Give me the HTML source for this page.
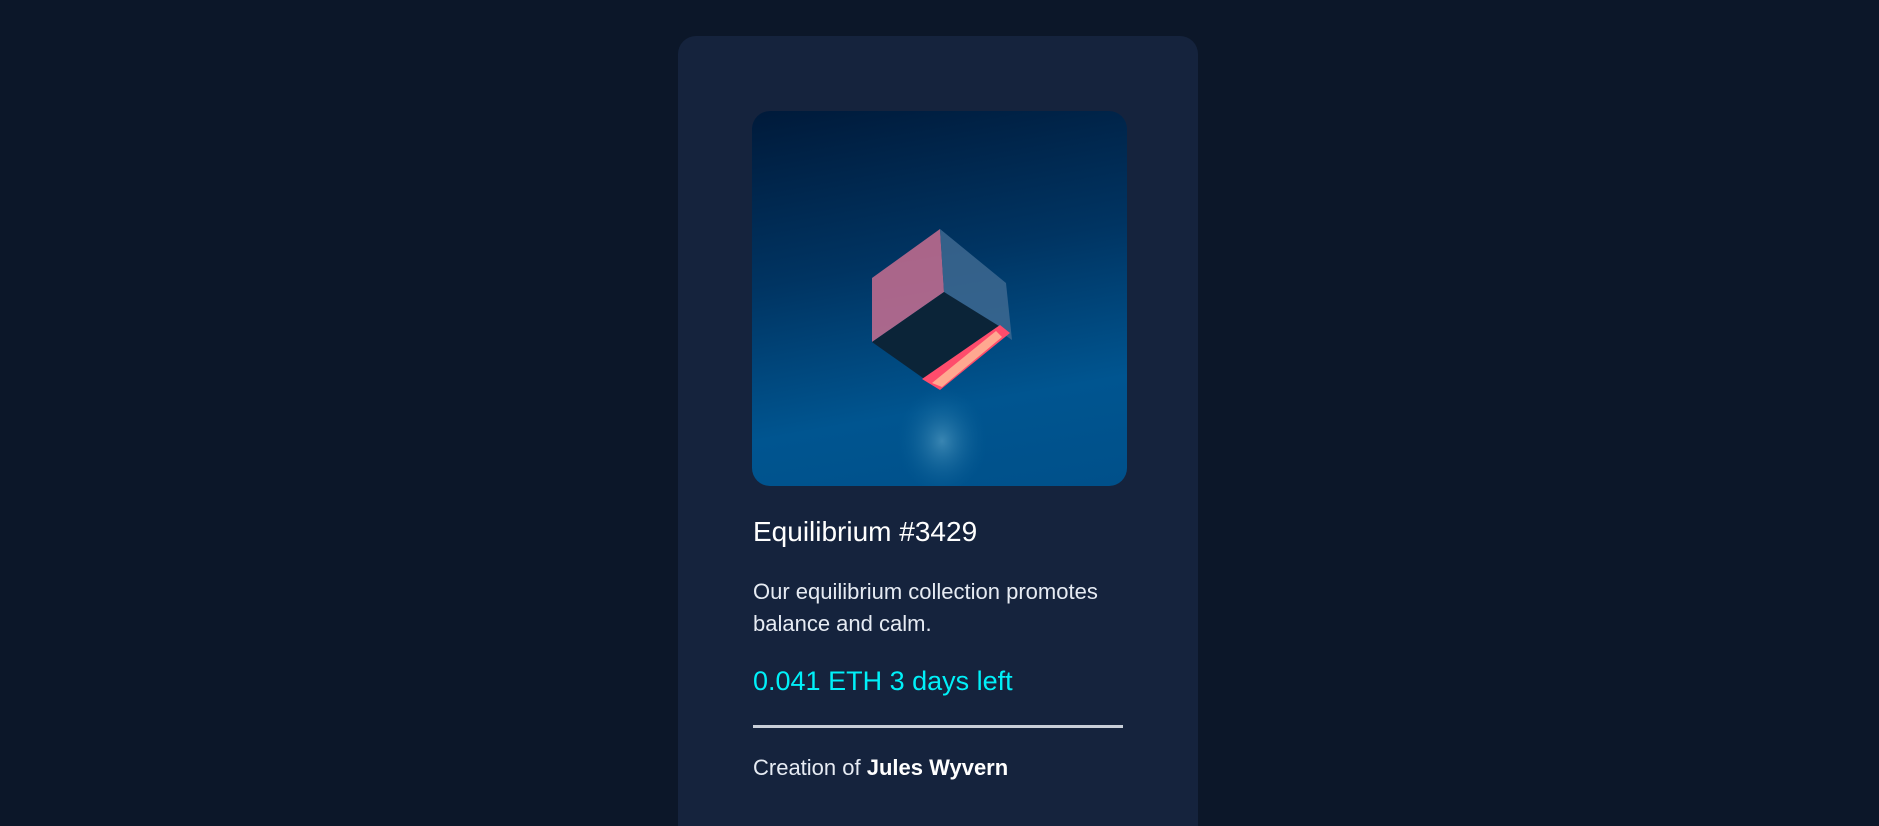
<!DOCTYPE html>
<html><head><meta charset="utf-8"><style>
*{margin:0;padding:0;box-sizing:border-box}
html,body{width:1879px;height:826px;overflow:hidden;background:#0c1729;font-family:"Liberation Sans",sans-serif}
.card{position:absolute;left:678px;top:36px;width:520px;height:790px;background:#15233d;border-radius:18px 18px 0 0}
.img{position:absolute;left:752px;top:111px;width:375px;height:375px;border-radius:18px;overflow:hidden;background:linear-gradient(170deg,#001a3a 0%,#003462 40%,#005590 75%,#00508a 100%)}
.t{position:absolute;left:753px;white-space:nowrap}
</style></head><body>
<div class="card"></div>
<div class="img">
<svg width="375" height="375" viewBox="0 0 375 375">
<defs>
<radialGradient id="g1" cx="0.5" cy="0.5" r="0.5"><stop offset="0" stop-color="#8fd0e8" stop-opacity=".8"/><stop offset="1" stop-color="#0a6aa0" stop-opacity="0"/></radialGradient>
</defs>
<ellipse cx="190" cy="330" rx="45" ry="55" fill="url(#g1)" opacity=".5"/>
<polygon points="188,118 120,167 120,231 192,181" fill="#c86f90" opacity=".85"/>
<polygon points="188,118 254,172 260,229 192,181" fill="#3d6890" opacity=".85"/>
<polygon points="120,231 192,181 255,220 188,279" fill="#0b2438"/>
<polygon points="170,268 188,279 258,222 248,214" fill="#ff4c6c"/>
<polygon points="180,272 190,276 250,226 244,220" fill="#ffa890"/>
</svg>
</div>
<div class="t" style="top:516px;font-size:28px;color:#fff">Equilibrium #3429</div>
<div class="t" style="top:576px;font-size:22px;line-height:32px;color:#e6ebf3">Our equilibrium collection promotes<br>balance and calm.</div>
<div class="t" style="top:666px;font-size:27px;color:#00f0f8">0.041 ETH 3 days left</div>
<div style="position:absolute;left:753px;top:725px;width:370px;height:3px;background:#c8ced8"></div>
<div class="t" style="top:755px;font-size:22px;color:#e6ebf3">Creation of <span style="color:#fff;font-weight:bold">Jules Wyvern</span></div>
</body></html>
